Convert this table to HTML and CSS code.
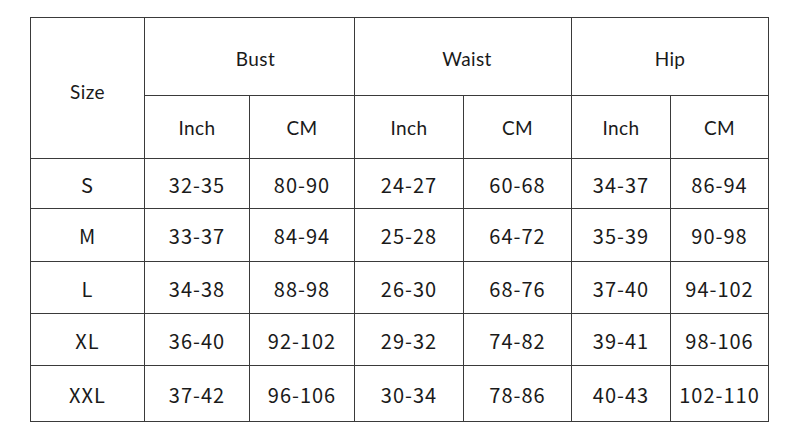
FILE: index.html
```html
<!DOCTYPE html>
<html>
<head>
<meta charset="utf-8">
<link rel="stylesheet" href="styles.css">
</head>
<body>
<table class="chart">
  <colgroup>
    <col class="c-size">
    <col class="c-bi">
    <col class="c-bc">
    <col class="c-wi">
    <col class="c-wc">
    <col class="c-hi">
    <col class="c-hc">
  </colgroup>
  <thead>
    <tr class="r-group">
      <th rowspan="2" class="h-size"><span>Size</span></th>
      <th colspan="2" class="h-bust"><span>Bust</span></th>
      <th colspan="2" class="h-waist"><span>Waist</span></th>
      <th colspan="2"><span>Hip</span></th>
    </tr>
    <tr class="r-unit">
      <th>Inch</th><th>CM</th>
      <th>Inch</th><th>CM</th>
      <th>Inch</th><th>CM</th>
    </tr>
  </thead>
  <tbody>
    <tr class="r1"><td>S</td><td>32-35</td><td>80-90</td><td>24-27</td><td>60-68</td><td>34-37</td><td>86-94</td></tr>
    <tr class="r2"><td>M</td><td>33-37</td><td>84-94</td><td>25-28</td><td>64-72</td><td>35-39</td><td>90-98</td></tr>
    <tr class="r3"><td>L</td><td>34-38</td><td>88-98</td><td>26-30</td><td>68-76</td><td>37-40</td><td>94-102</td></tr>
    <tr class="r4"><td>XL</td><td>36-40</td><td>92-102</td><td>29-32</td><td>74-82</td><td>39-41</td><td>98-106</td></tr>
    <tr class="r5"><td>XXL</td><td>37-42</td><td>96-106</td><td>30-34</td><td>78-86</td><td>40-43</td><td>102-110</td></tr>
  </tbody>
</table>
</body>
</html>
```
FILE: styles.css
```css
html, body {
  margin: 0;
  padding: 0;
  background: #ffffff;
}
body {
  padding: 17px 0 0 30px;
}
.chart {
  border-collapse: collapse;
  table-layout: fixed;
  width: 739px;
  color: #1a1a1a;
}
.c-size { width: 114px; }
.c-bi { width: 105px; }
.c-bc { width: 105px; }
.c-wi { width: 109px; }
.c-wc { width: 108px; }
.c-hi { width: 99px; }
.c-hc { width: 98px; }

.chart th, .chart td {
  border: 1px solid #3a3a3a;
  padding: 0;
  text-align: center;
  vertical-align: middle;
}
.chart th {
  font-family: Lato, "Open Sans", sans-serif;
  font-weight: 400;
  font-size: 19px;
  letter-spacing: 0.4px;
}
.chart td {
  font-family: "Noto Sans CJK KR", "Noto Sans", sans-serif;
  font-size: 20px;
  letter-spacing: 1px;
  padding-top: 1px;
}
.r-group { height: 78px; }
.r-group th { padding-top: 4px; }
.h-size span { position: relative; top: 1px; }
.h-bust span { position: relative; left: 6px; }
.h-waist span { position: relative; left: 4px; }
.r-unit { height: 63px; }
.r1 { height: 50px; }
.r2 { height: 53px; }
.r3 { height: 52px; }
.r4 { height: 52px; }
.r5 { height: 56px; }
```
